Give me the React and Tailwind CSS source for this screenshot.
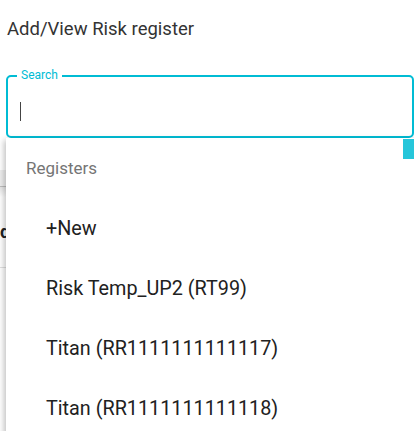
import React from 'react';

const registers = [
  '+New',
  'Risk Temp_UP2 (RT99)',
  'Titan (RR1111111111117)',
  'Titan (RR1111111111118)',
];

const App = () => {
  return (
    <div className="relative w-[414px] h-[431px] overflow-hidden bg-white font-['Roboto',sans-serif]">
      <h2 className="pl-[7px] pt-[16px] text-[18.5px] leading-[26px] text-[#333333] font-normal">
        Add/View Risk register
      </h2>

      {/* search field */}
      <div className="relative ml-[6px] mt-[33px] h-[63px] rounded-[5px] border-2 border-[#00bcd4] bg-white">
        <span className="absolute -top-[10px] left-[9px] px-[4px] bg-white text-[12px] leading-[16px] text-[#00bcd4]">
          Search
        </span>
        <div className="flex h-full items-center pl-[12px] pt-[10px]">
          <div className="w-px h-[19px] bg-[#444]" />
        </div>
      </div>

      {/* table behind the dropdown */}
      <div className="mt-[32px]">
        <div className="h-[17px] bg-[#eeeeee] border-b border-[#bdbdbd]" />
        <div className="h-[10px] bg-gradient-to-b from-[#e6e6e6] to-white" />
        <div className="h-[71px] flex items-center border-b border-[#e0e0e0]">
          <span className="text-[18px] font-bold text-[#222] leading-none">d</span>
        </div>
      </div>

      {/* dropdown */}
      <div className="absolute left-[6px] top-[138px] w-[420px] h-[300px] bg-white shadow-[-2px_2px_6px_rgba(0,0,0,0.25)]">
        <div className="h-[61px] flex items-center pl-[20px] text-[17px] text-[#757575]">Registers</div>
        <ul>
          {registers.map((r) => (
            <li key={r} className="h-[60px] flex items-center pl-[40px] text-[19.8px] text-[#212121]">
              {r}
            </li>
          ))}
        </ul>
      </div>

      <div className="absolute left-[403px] top-[139px] w-[11px] h-[20px] bg-[#26c6da]" />
    </div>
  );
};

export default App;
